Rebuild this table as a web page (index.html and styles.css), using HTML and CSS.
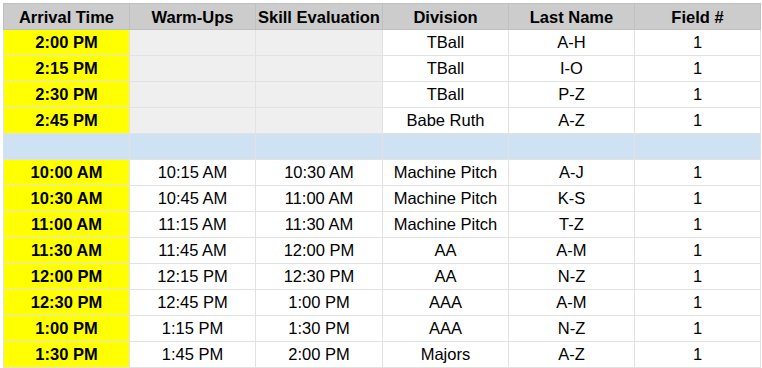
FILE: index.html
```html
<!DOCTYPE html>
<html>
<head>
<meta charset="utf-8">
<link rel="stylesheet" href="styles.css">
</head>
<body>
<div class="sheet">
<table class="grid">
  <thead>
    <tr class="head">
      <th>Arrival Time</th><th>Warm-Ups</th><th>Skill Evaluation</th><th>Division</th><th>Last Name</th><th>Field #</th>
    </tr>
  </thead>
  <tbody>
    <tr><td class="arr">2:00 PM</td><td class="na"></td><td class="na"></td><td>TBall</td><td>A-H</td><td>1</td></tr>
    <tr><td class="arr">2:15 PM</td><td class="na"></td><td class="na"></td><td>TBall</td><td>I-O</td><td>1</td></tr>
    <tr><td class="arr">2:30 PM</td><td class="na"></td><td class="na"></td><td>TBall</td><td>P-Z</td><td>1</td></tr>
    <tr><td class="arr">2:45 PM</td><td class="na"></td><td class="na"></td><td>Babe Ruth</td><td>A-Z</td><td>1</td></tr>
    <tr class="sep"><td></td><td></td><td></td><td></td><td></td><td></td></tr>
    <tr><td class="arr">10:00 AM</td><td>10:15 AM</td><td>10:30 AM</td><td>Machine Pitch</td><td>A-J</td><td>1</td></tr>
    <tr><td class="arr">10:30 AM</td><td>10:45 AM</td><td>11:00 AM</td><td>Machine Pitch</td><td>K-S</td><td>1</td></tr>
    <tr><td class="arr">11:00 AM</td><td>11:15 AM</td><td>11:30 AM</td><td>Machine Pitch</td><td>T-Z</td><td>1</td></tr>
    <tr><td class="arr">11:30 AM</td><td>11:45 AM</td><td>12:00 PM</td><td>AA</td><td>A-M</td><td>1</td></tr>
    <tr><td class="arr">12:00 PM</td><td>12:15 PM</td><td>12:30 PM</td><td>AA</td><td>N-Z</td><td>1</td></tr>
    <tr><td class="arr">12:30 PM</td><td>12:45 PM</td><td>1:00 PM</td><td>AAA</td><td>A-M</td><td>1</td></tr>
    <tr><td class="arr">1:00 PM</td><td>1:15 PM</td><td>1:30 PM</td><td>AAA</td><td>N-Z</td><td>1</td></tr>
    <tr><td class="arr">1:30 PM</td><td>1:45 PM</td><td>2:00 PM</td><td>Majors</td><td>A-Z</td><td>1</td></tr>
  </tbody>
</table>
</div>
</body>
</html>
```

FILE: styles.css
```css
html, body {
  margin: 0;
  padding: 0;
  background: #ffffff;
}
.sheet {
  padding: 3px 0 0 3px;
}
.grid {
  border-collapse: collapse;
  table-layout: fixed;
  font-family: "Liberation Sans", Arial, sans-serif;
  font-size: 16.5px;
  color: #000000;
}
.grid th,
.grid td {
  width: 121px;
  height: 25px;
  padding: 0 2px;
  border: 1px solid #e2e2e2;
  text-align: center;
  vertical-align: middle;
  white-space: nowrap;
  overflow: hidden;
  box-sizing: content-box;
}
.grid th {
  font-weight: bold;
  background: #cccccc;
  border-color: #c0c0c0;
  padding-top: 1px;
  height: 24px;
}
.grid td.arr {
  background: #ffff00;
  font-weight: bold;
}
.grid td.na {
  background: #efefef;
}
.grid tr.sep td {
  background: #cfe2f3;
}
```
